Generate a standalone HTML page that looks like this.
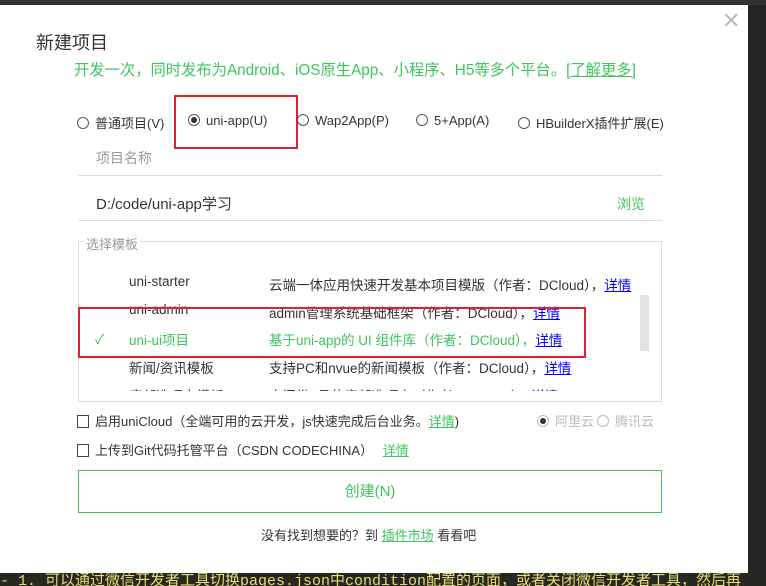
<!DOCTYPE html>
<html><head><meta charset="utf-8"><style>
*{margin:0;padding:0;box-sizing:border-box}
body{width:766px;height:586px;background:#252526;position:relative;overflow:hidden;font-family:"Liberation Sans","Noto Sans CJK SC",sans-serif;font-size:13px;color:#333}
.dlg{position:absolute;left:0;top:5px;width:748px;height:568px;background:#fff}
.a{position:absolute;white-space:nowrap}
.g{color:#3fc35f}
.r{display:inline-block;width:12px;height:12px;border:1px solid #555;border-radius:50%;vertical-align:-1px;margin-right:6px;position:relative}
.r.on::after{content:"";position:absolute;left:2px;top:2px;width:6px;height:6px;border-radius:50%;background:#333}
.cb{display:inline-block;width:12px;height:13px;border:1px solid #444;vertical-align:-2px;margin-right:6px}
a{color:#00f;text-decoration:underline}
.red{position:absolute;border:2px solid #e0202a}
</style></head><body>
<div style="position:absolute;left:0;top:0;width:766px;height:5px;background:#333"></div>
<div class="dlg"></div>
<div class="a" style="left:722px;top:8px;font-size:22px;color:#bbb;font-weight:100">✕</div>
<div class="a" style="left:36px;top:29px;font-size:18px;color:#333">新建项目</div>
<div class="a g" style="left:74px;top:58px;font-size:15.3px">开发一次，同时发布为Android、iOS原生App、小程序、H5等多个平台。<span style="text-decoration:underline">[了解更多]</span></div>
<div class="a" style="left:77px;top:113px"><span class="r"></span>普通项目(V)</div>
<div class="a" style="left:188px;top:113px"><span class="r on"></span>uni-app(U)</div>
<div class="a" style="left:297px;top:113px"><span class="r"></span>Wap2App(P)</div>
<div class="a" style="left:416px;top:113px"><span class="r"></span>5+App(A)</div>
<div class="a" style="left:518px;top:113px"><span class="r"></span>HBuilderX插件扩展(E)</div>
<div class="red" style="left:174px;top:95px;width:124px;height:54px"></div>
<div class="a" style="left:96px;top:148px;font-size:14px;color:#999">项目名称</div>
<div style="position:absolute;left:78px;top:175px;width:584px;height:1px;background:#ddd"></div>
<div class="a" style="left:96px;top:193px;font-size:15px;color:#333">D:/code/uni-app学习</div>
<div class="a g" style="left:617px;top:194px;font-size:14px">浏览</div>
<div style="position:absolute;left:78px;top:220px;width:584px;height:1px;background:#ddd"></div>
<div style="position:absolute;left:78px;top:241px;width:584px;height:161px;border:1px solid #ddd"></div>
<div class="a" style="left:84px;top:234px;background:#fff;color:#999;padding:0 2px">选择模板</div>
<div style="position:absolute;left:79px;top:255px;width:560px;height:136px;overflow:hidden;font-size:13.5px">
 <div class="a" style="left:50px;top:19px">uni-starter</div><div class="a" style="left:190px;top:19px">云端一体应用快速开发基本项目模版（作者：DCloud），<a>详情</a></div>
 <div class="a" style="left:50px;top:47px">uni-admin</div><div class="a" style="left:190px;top:47px">admin管理系统基础框架（作者：DCloud），<a>详情</a></div>
 <div class="a g" style="left:16px;top:73px">✓</div>
 <div class="a g" style="left:50px;top:74px">uni-ui项目</div><div class="a g" style="left:190px;top:74px">基于uni-app的 UI 组件库（作者：DCloud），<a>详情</a></div>
 <div class="a" style="left:50px;top:102px">新闻/资讯模板</div><div class="a" style="left:190px;top:102px">支持PC和nvue的新闻模板（作者：DCloud），<a>详情</a></div>
 <div class="a" style="left:50px;top:130px">底部选项卡模板</div><div class="a" style="left:190px;top:130px">中间带+号的底部选项卡（作者：DCloud），<a>详情</a></div>
</div>
<div style="position:absolute;left:640px;top:295px;width:9px;height:56px;background:#e3e3e3"></div>
<div class="red" style="left:78px;top:307px;width:508px;height:51px"></div>
<div class="a" style="left:77px;top:411px"><span class="cb"></span>启用uniCloud（全端可用的云开发，js快速完成后台业务。<span class="g" style="text-decoration:underline">详情</span>)</div>
<div class="a" style="left:537px;top:411px;color:#bbb"><span class="r on" style="border-color:#bbb"></span>阿里云<span class="r" style="border-color:#bbb;margin-left:3px"></span>腾讯云</div>
<div class="a" style="left:77px;top:440px"><span class="cb"></span>上传到Git代码托管平台（CSDN CODECHINA） <span class="g" style="text-decoration:underline;margin-left:6px">详情</span></div>
<div style="position:absolute;left:78px;top:470px;width:584px;height:43px;border:1px solid #3fc35f;color:#3fc35f;font-size:15px;text-align:center;line-height:41px">创建(N)</div>
<div class="a" style="left:261px;top:525px">没有找到想要的？到 <span class="g" style="text-decoration:underline">插件市场</span> 看看吧</div>
<div style="position:absolute;left:0;top:573px;width:766px;height:13px;background:#272822;overflow:hidden"><div class="a" style="left:0;top:-4px;font-family:'Liberation Mono','Noto Sans CJK SC',monospace;font-size:15px;color:#e6db74">- 1. 可以通过微信开发者工具切换pages.json中condition配置的页面，或者关闭微信开发者工具，然后再</div></div>
</body></html>
